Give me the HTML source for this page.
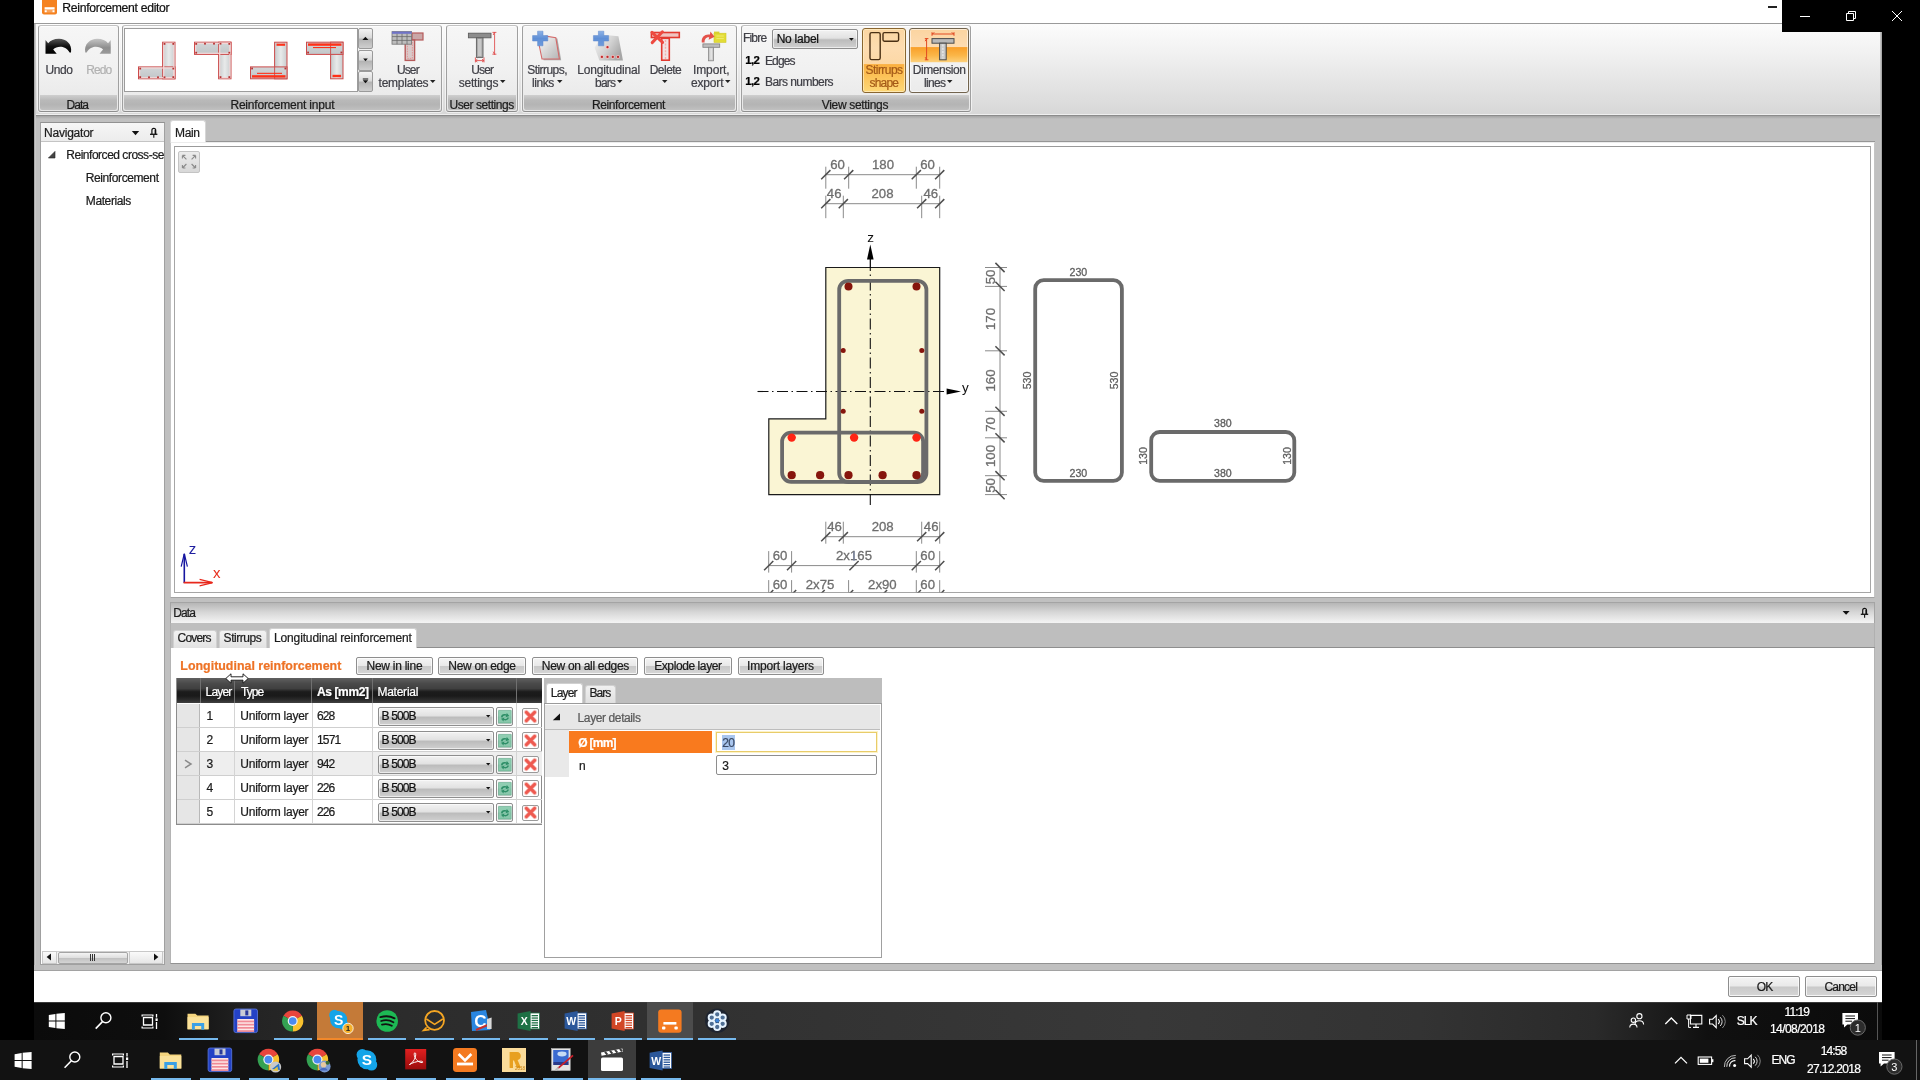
<!DOCTYPE html>
<html lang="en"><head><meta charset="utf-8"><title>Reinforcement editor</title>
<style>
html,body{margin:0;padding:0;background:#000;}
body{width:1920px;height:1080px;position:relative;overflow:hidden;font-family:"Liberation Sans",sans-serif;font-size:11.6px;}
div,span,svg,button,label,h1,h2,ul,li,table{position:absolute;box-sizing:border-box;margin:0;padding:0;}
.t{white-space:nowrap;line-height:1;-webkit-text-stroke:0.22px currentColor;}
svg{overflow:visible;}
#app{left:0;top:0;width:1920px;height:1080px;will-change:transform;}
.grp{border:1px solid #a0a0a0;border-top-color:#c2c2c2;border-bottom-color:#8e8e8e;border-radius:3px;background:linear-gradient(#f6f6f6,#f1f1f1 50%,#e7e7e7);box-shadow:inset 0 1px 0 rgba(255,255,255,.8),0 0 0 1px rgba(255,255,255,.6);}
.grpl{left:1px;right:1px;bottom:1px;height:15px;background:linear-gradient(#cfcfcf,#b9b9b9 35%,#b4b4b4 65%,#c0c0c0);border-radius:0 0 2px 2px;}
.btn{border:1px solid #8e8e8e;border-radius:2px;background:linear-gradient(#f4f4f4,#e9e9e9 48%,#c9c9c9 52%,#d6d6d6);box-shadow:inset 0 0 0 1px rgba(255,255,255,.75);}
.cmb{border:1px solid #8e8e8e;border-radius:2px;background:linear-gradient(#f2f2f2,#e2e2e2 45%,#bcbcbc 55%,#d0d0d0);box-shadow:inset 0 0 0 1px rgba(255,255,255,.6);}
</style></head><body><div id="app">
<div class="win" style="left:34px;top:0px;width:1848px;height:1002px;background:#fff;"></div>
<div style="left:34px;top:0px;width:1848px;height:23px;background:#fff;"></div>
<svg style="left:42px;top:0" width="15" height="15" viewBox="0 0 15 15"><rect x="0" y="-2" width="15" height="16.5" rx="2" fill="#f58220"/><rect x="2.6" y="7.2" width="10" height="2.5" fill="#fff"/><rect x="2.2" y="9.7" width="10.8" height="2.8" fill="#f9a45c"/><rect x="2.8" y="10.3" width="1.9" height="1.9" fill="#fff"/><rect x="10.5" y="10.3" width="1.9" height="1.9" fill="#fff"/></svg>
<span class="t" style="left:62.30px;top:2.00px;font-size:12.2px;color:#111;letter-spacing:-0.304px;">Reinforcement editor</span>
<div style="left:1767.5px;top:6.3px;width:9.5px;height:1.8px;background:#222;"></div>
<div style="left:34px;top:23px;width:1848px;height:1px;background:#9a9a9a;"></div>
<div style="left:34px;top:24px;width:1848px;height:91px;background:linear-gradient(#fcfcfc,#f0f0f0 35%,#d7d7d7);"></div>
<div style="left:34px;top:114px;width:1848px;height:1px;background:#efefef;"></div>
<div style="left:34px;top:115px;width:1848px;height:1px;background:#8c8c8c;"></div>
<div style="left:34px;top:116px;width:1848px;height:855px;background:#c0c0c0;"></div>
<div style="left:34px;top:116px;width:1848px;height:3px;background:linear-gradient(#a4a4a4,#c0c0c0);"></div>
<div style="left:34px;top:24px;width:2px;height:947px;background:linear-gradient(90deg,#9c9c9c,#d8d8d8);"></div>
<div style="left:1880px;top:24px;width:2px;height:947px;background:linear-gradient(90deg,#d0d0d0,#9c9c9c);"></div>
<div style="left:1782px;top:0px;width:138px;height:32px;background:#000;"></div>
<svg style="left:1782px;top:0" width="138" height="32" viewBox="1782 0 138 32" fill="none" stroke="#fff" stroke-width="1"><path d="M1800 16.5h10"/><path d="M1846.5 13.5h7v7h-7z"/><path d="M1848.5 13.5v-2h7v7h-2"/><path d="M1892 11l10 10M1902 11l-10 10"/></svg>
<div class="grp" style="left:38px;top:25px;width:81px;height:87px;"><div class="grpl"></div></div>
<span class="t" style="left:66.40px;top:99.00px;font-size:12px;color:#1c1c1c;letter-spacing:-0.900px;">Data</span>
<div class="grp" style="left:122px;top:25px;width:319.5px;height:87px;"><div class="grpl"></div></div>
<span class="t" style="left:230.40px;top:99.00px;font-size:12px;color:#1c1c1c;letter-spacing:-0.178px;">Reinforcement input</span>
<div class="grp" style="left:445.5px;top:25px;width:72px;height:87px;"><div class="grpl"></div></div>
<span class="t" style="left:449.40px;top:99.00px;font-size:12px;color:#1c1c1c;letter-spacing:-0.427px;">User settings</span>
<div class="grp" style="left:521.5px;top:25px;width:215px;height:87px;"><div class="grpl"></div></div>
<span class="t" style="left:592.00px;top:99.00px;font-size:12px;color:#1c1c1c;letter-spacing:-0.397px;">Reinforcement</span>
<div class="grp" style="left:740.5px;top:25px;width:230px;height:87px;"><div class="grpl"></div></div>
<span class="t" style="left:821.80px;top:99.00px;font-size:12px;color:#1c1c1c;letter-spacing:-0.325px;">View settings</span>
<svg style="left:44px;top:37px" width="30" height="19" viewBox="44 37 30 19">
<defs><linearGradient id="gu" x1="0" y1="0" x2="0" y2="1"><stop offset="0" stop-color="#555"/><stop offset=".5" stop-color="#111"/><stop offset="1" stop-color="#000"/></linearGradient>
<linearGradient id="gr" x1="0" y1="0" x2="0" y2="1"><stop offset="0" stop-color="#c4c4c4"/><stop offset=".6" stop-color="#8e8e8e"/><stop offset="1" stop-color="#9a9a9a"/></linearGradient></defs>
<path d="M45.5 40 L45.5 53.7 L56.7 53.7 L53.2 49.6 C57 46 65 45 69.6 52.6 L71 52.4 C72.5 44 66 38.8 59 38.8 C54 38.8 50.5 40.6 48.2 43.2 Z" fill="url(#gu)"/>
</svg>
<svg style="left:84px;top:37px" width="30" height="19" viewBox="84 37 30 19">
<path d="M110.75 40 L110.75 53.7 L99.55 53.7 L103.05 49.6 C99.25 46 91.25 45 86.65 52.6 L85.25 52.4 C83.75 44 90.25 38.8 97.25 38.8 C102.25 38.8 105.75 40.6 108.05 43.2 Z" fill="url(#gr)"/>
</svg>
<span class="t" style="left:45.60px;top:64.00px;font-size:12px;color:#3f3f46;letter-spacing:-0.493px;">Undo</span>
<span class="t" style="left:86.20px;top:64.00px;font-size:12px;color:#b2b2b2;letter-spacing:-0.900px;">Redo</span>
<div style="left:124.3px;top:28px;width:233.7px;height:64px;background:#fff;border:1px solid #9c9c9c;"></div>
<svg style="left:136.3px;top:39px" width="42" height="44" viewBox="136.3 39 42 44"><defs><linearGradient id="gg138" x1="0" y1="0" x2="1" y2="0"><stop offset="0" stop-color="#c6cacc"/><stop offset=".5" stop-color="#e8eaea"/><stop offset="1" stop-color="#c8ccce"/></linearGradient><linearGradient id="gh138" x1="0" y1="0" x2="0" y2="1"><stop offset="0" stop-color="#d2d6d8"/><stop offset="1" stop-color="#c2c6c8"/></linearGradient></defs><rect x="162.9" y="42.2" width="12.4" height="36.599999999999994" fill="url(#gg138)" stroke="#cc4a4a" stroke-width="1"/><rect x="138.8" y="66.9" width="36.5" height="11.899999999999991" fill="url(#gh138)" stroke="#cc4a4a" stroke-width="1"/><path d="M162.9 66.9V78.8" stroke="#cc4a4a" stroke-width=".9"/><rect x="139.9" y="68.0" width="34.3" height="9.699999999999992" fill="none" stroke="#f3d6d6" stroke-width="1.2"/><rect x="164.0" y="43.300000000000004" width="10.2" height="34.39999999999999" fill="none" stroke="#f3d6d6" stroke-width="1.2"/><rect x="139.6" y="67.7" width="1.8" height="1.8" fill="#b83434"/><rect x="139.6" y="76.2" width="1.8" height="1.8" fill="#b83434"/><rect x="148.4" y="76.4" width="1.8" height="1.8" fill="#b83434"/><rect x="157.4" y="76.4" width="1.8" height="1.8" fill="#b83434"/><rect x="163.9" y="76.4" width="1.8" height="1.8" fill="#b83434"/><rect x="172.7" y="76.2" width="1.8" height="1.8" fill="#b83434"/><rect x="172.7" y="67.7" width="1.8" height="1.8" fill="#b83434"/><rect x="163.9" y="43.0" width="1.8" height="1.8" fill="#b83434"/><rect x="172.7" y="43.0" width="1.8" height="1.8" fill="#b83434"/></svg>
<svg style="left:192.2px;top:39px" width="42" height="44" viewBox="192.2 39 42 44"><defs><linearGradient id="gg194" x1="0" y1="0" x2="1" y2="0"><stop offset="0" stop-color="#c6cacc"/><stop offset=".5" stop-color="#e8eaea"/><stop offset="1" stop-color="#c8ccce"/></linearGradient><linearGradient id="gh194" x1="0" y1="0" x2="0" y2="1"><stop offset="0" stop-color="#d2d6d8"/><stop offset="1" stop-color="#c2c6c8"/></linearGradient></defs><rect x="218.79999999999998" y="42.2" width="12.4" height="36.599999999999994" fill="url(#gg194)" stroke="#cc4a4a" stroke-width="1"/><rect x="194.7" y="42.2" width="36.5" height="12.199999999999996" fill="url(#gh194)" stroke="#cc4a4a" stroke-width="1"/><path d="M218.79999999999998 42.2V54.4" stroke="#cc4a4a" stroke-width=".9"/><rect x="195.79999999999998" y="43.300000000000004" width="34.3" height="9.999999999999996" fill="none" stroke="#f3d6d6" stroke-width="1.2"/><rect x="219.89999999999998" y="43.300000000000004" width="10.2" height="34.39999999999999" fill="none" stroke="#f3d6d6" stroke-width="1.2"/><rect x="195.5" y="43.0" width="1.8" height="1.8" fill="#b83434"/><rect x="195.5" y="51.8" width="1.8" height="1.8" fill="#b83434"/><rect x="204.3" y="42.8" width="1.8" height="1.8" fill="#b83434"/><rect x="213.3" y="42.8" width="1.8" height="1.8" fill="#b83434"/><rect x="219.8" y="42.8" width="1.8" height="1.8" fill="#b83434"/><rect x="228.6" y="43.0" width="1.8" height="1.8" fill="#b83434"/><rect x="228.6" y="51.8" width="1.8" height="1.8" fill="#b83434"/><rect x="219.8" y="76.2" width="1.8" height="1.8" fill="#b83434"/><rect x="228.6" y="76.2" width="1.8" height="1.8" fill="#b83434"/></svg>
<svg style="left:248px;top:39px" width="42" height="44" viewBox="248 39 42 44"><defs><linearGradient id="gg250" x1="0" y1="0" x2="1" y2="0"><stop offset="0" stop-color="#c6cacc"/><stop offset=".5" stop-color="#e8eaea"/><stop offset="1" stop-color="#c8ccce"/></linearGradient><linearGradient id="gh250" x1="0" y1="0" x2="0" y2="1"><stop offset="0" stop-color="#d2d6d8"/><stop offset="1" stop-color="#c2c6c8"/></linearGradient></defs><rect x="274.6" y="42.2" width="12.4" height="36.599999999999994" fill="url(#gg250)" stroke="#cc4a4a" stroke-width="1"/><rect x="250.5" y="66.9" width="36.5" height="11.899999999999991" fill="url(#gh250)" stroke="#cc4a4a" stroke-width="1"/><path d="M274.6 66.9V78.8" stroke="#cc4a4a" stroke-width=".9"/><rect x="252" y="75.2" width="33.5" height="2.4" fill="#ff3018"/><rect x="257" y="72.8" width="25" height="1.1" fill="#ff3018"/><rect x="276.5" y="43.6" width="8.6" height="2.2" fill="#ff3018"/><rect x="251.2" y="67.6" width="1.8" height="1.8" fill="#b83434"/><rect x="284.5" y="67.6" width="1.8" height="1.8" fill="#b83434"/></svg>
<svg style="left:303.8px;top:39px" width="42" height="44" viewBox="303.8 39 42 44"><defs><linearGradient id="gg305" x1="0" y1="0" x2="1" y2="0"><stop offset="0" stop-color="#c6cacc"/><stop offset=".5" stop-color="#e8eaea"/><stop offset="1" stop-color="#c8ccce"/></linearGradient><linearGradient id="gh305" x1="0" y1="0" x2="0" y2="1"><stop offset="0" stop-color="#d2d6d8"/><stop offset="1" stop-color="#c2c6c8"/></linearGradient></defs><rect x="330.40000000000003" y="42.2" width="12.4" height="36.599999999999994" fill="url(#gg305)" stroke="#cc4a4a" stroke-width="1"/><rect x="306.3" y="42.2" width="36.5" height="12.199999999999996" fill="url(#gh305)" stroke="#cc4a4a" stroke-width="1"/><path d="M330.40000000000003 42.2V54.4" stroke="#cc4a4a" stroke-width=".9"/><rect x="307.8" y="43.4" width="33.5" height="2.4" fill="#ff3018"/><rect x="312.8" y="47" width="23" height="1.1" fill="#ff3018"/><rect x="332.3" y="74.8" width="8.6" height="2.4" fill="#ff3018"/><rect x="307.0" y="51.6" width="1.8" height="1.8" fill="#b83434"/><rect x="340.3" y="51.6" width="1.8" height="1.8" fill="#b83434"/></svg>
<div style="left:358px;top:28px;width:14.5px;height:21px;background:linear-gradient(#f4f4f4,#dadada 45%,#b4b4b4 55%,#cfcfcf);border:1px solid #9a9a9a;border-radius:2px;"></div>
<div style="left:358px;top:49.5px;width:14.5px;height:21px;background:linear-gradient(#f4f4f4,#dadada 45%,#b4b4b4 55%,#cfcfcf);border:1px solid #9a9a9a;border-radius:2px;"></div>
<div style="left:358px;top:71px;width:14.5px;height:21px;background:linear-gradient(#f4f4f4,#dadada 45%,#b4b4b4 55%,#cfcfcf);border:1px solid #9a9a9a;border-radius:2px;"></div>
<svg style="left:358px;top:28px" width="15" height="64" viewBox="358 28 15 64" fill="#111"><path d="M362.4 40h6l-3-3.2z"/><path d="M363.2 58.6h4.6l-2.3 2.6z"/><path d="M362.8 78.4h5.4v1h-5.4zM362.8 80.2h5.4l-2.7 3z"/></svg>
<svg style="left:391px;top:30px" width="34" height="33" viewBox="391 30 34 33">
<rect x="412" y="33" width="11" height="7" fill="#c9a7a7" stroke="#b65a5a" stroke-width="1.2"/>
<rect x="405.2" y="40" width="9.4" height="20.4" fill="#d9c9c9" stroke="#b65a5a" stroke-width="1.4"/>
<rect x="407.4" y="42" width="5" height="16.4" fill="none" stroke="#e58a8a" stroke-width=".8" stroke-dasharray="1.5 1"/>
<rect x="392" y="31.6" width="19.6" height="12.6" fill="#bdbdbd" stroke="#767676" stroke-width=".8"/>
<rect x="392" y="31.6" width="19.6" height="2.2" fill="#6f73c8"/>
<path d="M392 36.6h19.6M392 40.4h19.6M397 33.8v10.4M402 33.8v10.4M407 33.8v10.4" stroke="#6a6a6a" stroke-width=".8"/>
</svg>
<span class="t" style="left:397.00px;top:64.00px;font-size:12px;color:#3f3f46;letter-spacing:-0.900px;">User</span>
<span class="t" style="left:378.60px;top:77.00px;font-size:12px;color:#3f3f46;letter-spacing:-0.253px;">templates</span>
<svg style="left:430.4px;top:80px" width="5.5" height="3" viewBox="0 0 5.5 3"><path d="M0 0h5.5l-2.75 3z" fill="#222"/></svg>
<svg style="left:466px;top:30px" width="34" height="34" viewBox="466 30 34 34">
<rect x="468.4" y="33.2" width="22.6" height="4.6" fill="#8d8d8d" stroke="#5e5e5e" stroke-width=".9"/>
<rect x="476.4" y="37.8" width="6.6" height="19.6" fill="#a9a9a9" stroke="#5e5e5e" stroke-width=".9"/>
<rect x="478" y="39" width="3.4" height="17" fill="#c8c8c8"/>
<path d="M494.6 32v22.6M492.4 32.4h4M492.4 54.2h4M494.6 32l-1.4 3M494.6 54.6l-1.4-3" stroke="#e05050" stroke-width=".9" fill="none"/>
<path d="M475.4 57.4v5M484 57.4v5M475.4 60.6h8.6M475.4 60.6l2-1.4M484 60.6l-2-1.4M475.4 60.6l2 1.4M484 60.6l-2 1.4" stroke="#e05050" stroke-width=".9" fill="none"/>
</svg>
<span class="t" style="left:471.30px;top:64.00px;font-size:12px;color:#3f3f46;letter-spacing:-0.900px;">User</span>
<span class="t" style="left:458.80px;top:77.00px;font-size:12px;color:#3f3f46;letter-spacing:-0.249px;">settings</span>
<svg style="left:499.8px;top:80px" width="5.5" height="3" viewBox="0 0 5.5 3"><path d="M0 0h5.5l-2.75 3z" fill="#222"/></svg>
<svg style="left:531px;top:30px" width="32" height="34" viewBox="531 30 32 34">
<defs><linearGradient id="gs1" x1="0" y1="0" x2="1" y2="1"><stop offset="0" stop-color="#fafafa"/><stop offset="1" stop-color="#b4b4b4"/></linearGradient>
<linearGradient id="gpl" x1="0" y1="0" x2="0" y2="1"><stop offset="0" stop-color="#8db2e6"/><stop offset=".5" stop-color="#5f8fd6"/><stop offset="1" stop-color="#6c9adc"/></linearGradient></defs>
<path d="M540.6 45.5L543.6 60.2L561.2 60.2L557.4 38.6L547.6 37Z" fill="#a9a9a9"/>
<path d="M539 44.5L542 59L559.4 59L555.8 37.8L546 36.2Z" fill="url(#gs1)" stroke="#d46a6a" stroke-width="1.1"/>
<path d="M537.6 31.2h5.4v4.4h4.8v5.4h-4.8v4.8h-5.4v-4.8h-5v-5.4h5z" fill="url(#gpl)" stroke="#5a86cc" stroke-width=".5"/>
</svg>
<span class="t" style="left:527.30px;top:64.00px;font-size:12px;color:#3f3f46;letter-spacing:-0.562px;">Stirrups,</span>
<span class="t" style="left:532.00px;top:77.00px;font-size:12px;color:#3f3f46;letter-spacing:-0.425px;">links</span>
<svg style="left:556.7px;top:80px" width="5.5" height="3" viewBox="0 0 5.5 3"><path d="M0 0h5.5l-2.75 3z" fill="#222"/></svg>
<svg style="left:592px;top:30px" width="32" height="34" viewBox="592 30 32 34">
<defs><linearGradient id="gs2" x1="0" y1="0" x2="1" y2=".6"><stop offset="0" stop-color="#f6f6f6"/><stop offset=".55" stop-color="#d2d2d2"/><stop offset="1" stop-color="#a6a6a6"/></linearGradient></defs>
<path d="M603 34.8L618.4 36.2L623 60.4L599.4 60.4L594.6 47.6Z" fill="url(#gs2)"/>
<circle cx="607.5" cy="47.2" r="2" fill="#f6c4c4"/><circle cx="607.5" cy="47.2" r="1.15" fill="#c02a2a"/>
<circle cx="601.9" cy="56.9" r="1.9" fill="#f0c0c0"/><circle cx="601.9" cy="56.9" r="1.15" fill="#c02a2a"/><circle cx="607.5" cy="56.9" r="1.9" fill="#f0c0c0"/><circle cx="607.5" cy="56.9" r="1.15" fill="#c02a2a"/><circle cx="612.8" cy="56.9" r="1.9" fill="#f0c0c0"/><circle cx="612.8" cy="56.9" r="1.15" fill="#c02a2a"/><circle cx="618" cy="56.9" r="1.9" fill="#f0c0c0"/><circle cx="618" cy="56.9" r="1.15" fill="#c02a2a"/>
<path d="M598.4 31.2h5.4v4.4h4.8v5.4h-4.8v4.8h-5.4v-4.8h-5v-5.4h5z" fill="url(#gpl)" stroke="#5a86cc" stroke-width=".5"/>
</svg>
<span class="t" style="left:577.30px;top:64.00px;font-size:12px;color:#3f3f46;letter-spacing:-0.158px;">Longitudinal</span>
<span class="t" style="left:595.00px;top:77.00px;font-size:12px;color:#3f3f46;letter-spacing:-0.780px;">bars</span>
<svg style="left:617.2px;top:80px" width="5.5" height="3" viewBox="0 0 5.5 3"><path d="M0 0h5.5l-2.75 3z" fill="#222"/></svg>
<svg style="left:649px;top:30px" width="33" height="33" viewBox="649 30 33 33">
<rect x="651.4" y="32.5" width="27.9" height="5" fill="#f0c4c0" stroke="#e23a30" stroke-width="1.6"/>
<rect x="661.7" y="38.3" width="7.6" height="21.9" fill="#f0e4e4" stroke="#e23a30" stroke-width="1.6"/>
<path d="M665.5 40v19" stroke="#f4b0ac" stroke-width="1.4" stroke-dasharray="2 1.4"/>
<path d="M652 32.4L662.6 42.4M662.4 31.8L652.2 42.6" stroke="#ee4a40" stroke-width="3" stroke-linecap="round"/>
</svg>
<span class="t" style="left:649.70px;top:64.00px;font-size:12px;color:#3f3f46;letter-spacing:-0.516px;">Delete</span>
<svg style="left:662px;top:80px" width="5.5" height="3" viewBox="0 0 5.5 3"><path d="M0 0h5.5l-2.75 3z" fill="#222"/></svg>
<svg style="left:699px;top:30px" width="30" height="33" viewBox="699 30 30 33">
<rect x="702.9" y="43.9" width="16.8" height="3.4" fill="#bdbdbd" stroke="#7e7e7e" stroke-width=".8"/>
<rect x="708.6" y="47.3" width="5" height="13.5" fill="#cdcdcd" stroke="#868686" stroke-width=".8"/>
<path d="M711.1 48.5v11" stroke="#f2f2f2" stroke-width="1"/>
<rect x="714" y="33.2" width="12" height="9.2" fill="#e2dc36" stroke="#cfc826" stroke-width=".6"/>
<rect x="714" y="31.6" width="5.4" height="2.4" fill="#d8d22e"/>
<path d="M716.4 36h7.4M716.4 38.6h7.4" stroke="#f0ea70" stroke-width="1"/>
<path d="M701.8 42.4C701 36.6 705.6 33.6 710 34.6L710.4 31.4L714.6 36.8L708.6 39.8L709.2 37.2C706.4 36.8 704.4 39 704.6 42.4Z" fill="#e4524a"/>
</svg>
<span class="t" style="left:693.00px;top:64.00px;font-size:12px;color:#3f3f46;letter-spacing:-0.120px;">Import,</span>
<span class="t" style="left:691.00px;top:77.00px;font-size:12px;color:#3f3f46;letter-spacing:-0.172px;">export</span>
<svg style="left:724.8px;top:80px" width="5.5" height="3" viewBox="0 0 5.5 3"><path d="M0 0h5.5l-2.75 3z" fill="#222"/></svg>
<span class="t" style="left:742.90px;top:32.00px;font-size:12px;color:#3f3f46;letter-spacing:-0.765px;">Fibre</span>
<div class="cmb" style="left:772.2px;top:28.7px;width:86.2px;height:20px;"></div>
<span class="t" style="left:776.70px;top:33.00px;font-size:12px;color:#111;letter-spacing:-0.249px;">No label</span>
<svg style="left:849.2px;top:37.6px" width="4.8" height="2.8" viewBox="0 0 4.8 2.8"><path d="M0 0h4.8l-2.4 2.8z" fill="#111"/></svg>
<span class="t" style="left:745.20px;top:55.00px;font-size:11.4px;color:#000;font-weight:bold;letter-spacing:-0.623px;">1,2</span>
<span class="t" style="left:765.00px;top:55.00px;font-size:12px;color:#3f3f46;letter-spacing:-0.900px;">Edges</span>
<span class="t" style="left:745.20px;top:76.00px;font-size:11.4px;color:#000;font-weight:bold;letter-spacing:-0.623px;">1,2</span>
<span class="t" style="left:765.00px;top:76.00px;font-size:12px;color:#3f3f46;letter-spacing:-0.555px;">Bars numbers</span>
<div style="left:862px;top:28.3px;width:43.8px;height:64.7px;border:1px solid #8a6630;border-radius:3px;background:linear-gradient(#fbd6a2,#fddcb0 30%,#fcd8a6 55%,#fbb040 56.5%,#fcc258 75%,#fdd878);box-shadow:inset 0 0 0 1px rgba(255,240,200,.7);"></div>
<svg style="left:866px;top:30px" width="36" height="32" viewBox="866 30 36 32" fill="none" stroke="#4a3014" stroke-width="1.4">
<rect x="870" y="32.6" width="10.2" height="27" rx="1.6"/><rect x="883" y="32.6" width="15.6" height="8.6" rx="1.4"/></svg>
<span class="t" style="left:865.60px;top:64.00px;font-size:12px;color:#a45a18;letter-spacing:-0.563px;">Stirrups</span>
<span class="t" style="left:869.50px;top:77.00px;font-size:12px;color:#a45a18;letter-spacing:-0.800px;">shape</span>
<div style="left:909px;top:28.3px;width:60.2px;height:64.7px;border:1px solid #72644e;border-radius:3px;background:linear-gradient(#fbd4a0,#fddcb2 28%,#f9a02a 29.5%,#fbb648 42%,#fdcf78 52%,#f2f2f2 53.5%,#ebebeb);box-shadow:inset 0 0 0 1px rgba(255,255,255,.55);"></div>
<svg style="left:922px;top:30px" width="36" height="32" viewBox="922 30 36 32">
<rect x="932" y="38.6" width="22" height="4.6" fill="#b9b9b9" stroke="#4a4a4a" stroke-width="1"/>
<rect x="939.6" y="43.2" width="6.6" height="16.6" fill="#c9c9c9" stroke="#4a4a4a" stroke-width="1"/>
<path d="M942.9 44.6v14" stroke="#eee" stroke-width="1.2" stroke-dasharray="2 1.2"/>
<path d="M932 34h22M932 32.2v3.6M954 32.2v3.6M932 34l2.4-1.4M954 34l-2.4-1.4" stroke="#e24a22" stroke-width="1" fill="none"/>
<path d="M926.6 38.6v21.2M924.8 38.6h3.6M924.8 59.8h3.6M926.6 38.6l-1.4 2.6M926.6 59.8l-1.4-2.6" stroke="#e24a22" stroke-width="1" fill="none"/>
</svg>
<span class="t" style="left:912.80px;top:64.00px;font-size:12px;color:#3f3f46;letter-spacing:-0.450px;">Dimension</span>
<span class="t" style="left:924.00px;top:77.00px;font-size:12px;color:#3f3f46;letter-spacing:-0.665px;">lines</span>
<svg style="left:947.4px;top:80px" width="5.5" height="3" viewBox="0 0 5.5 3"><path d="M0 0h5.5l-2.75 3z" fill="#222"/></svg>
<div style="left:40px;top:122px;width:124.5px;height:842.5px;background:#fff;border:1px solid #a0a0a0;border-top-color:#929292;"></div>
<div style="left:41px;top:123px;width:122.5px;height:19px;background:linear-gradient(#f6f6f6,#ececec);border-bottom:1px solid #c4c4c4;"></div>
<span class="t" style="left:44.00px;top:127.00px;font-size:12px;color:#1c1c1c;letter-spacing:-0.220px;">Navigator</span>
<svg style="left:131px;top:128px" width="28" height="11" viewBox="131 128 28 11"><path d="M131.8 131h7.4l-3.7 4.2z" fill="#111"/><path d="M151.9 134V130.2A1.9 1.9 0 0 1 155.7 130.2V134" fill="none" stroke="#111" stroke-width="1.2"/><path d="M155.3 130V134" stroke="#111" stroke-width="1.4"/><path d="M150 134.3H157.4" stroke="#111" stroke-width="1.3"/><path d="M153.8 134.6V137.8" stroke="#111" stroke-width="1.1"/></svg>
<svg style="left:48px;top:151px" width="8" height="8" viewBox="0 0 8 8"><path d="M7 0.4V7H0.4z" fill="#444" stroke="#222" stroke-width=".6"/></svg>
<div style="left:41.5px;top:143px;width:122px;height:30px;overflow:hidden;position:absolute">
<span class="t" style="left:24.80px;top:6.00px;font-size:12px;color:#1c1c1c;letter-spacing:-0.481px;">Reinforced cross-section</span>
</div>
<span class="t" style="left:85.80px;top:172.00px;font-size:12px;color:#1c1c1c;letter-spacing:-0.405px;">Reinforcement</span>
<span class="t" style="left:85.80px;top:195.00px;font-size:12px;color:#1c1c1c;letter-spacing:-0.395px;">Materials</span>
<div style="left:41.5px;top:950.5px;width:122px;height:13px;background:#f0f0f0;border-top:1px solid #d0d0d0;"></div>
<div style="left:41.5px;top:951px;width:15.5px;height:12.5px;background:linear-gradient(#fafafa,#e6e6e6);border:1px solid #c8c8c8;"></div>
<div style="left:129.3px;top:951px;width:34px;height:12.5px;background:linear-gradient(#fafafa,#e6e6e6);border:1px solid #c8c8c8;"></div>
<div style="left:57.8px;top:951.5px;width:70.5px;height:12px;background:linear-gradient(#f4f4f4,#e0e0e0 45%,#c2c2c2 55%,#d4d4d4);border:1px solid #a4a4a4;border-radius:2px;"></div>
<svg style="left:41px;top:951px" width="124" height="13" viewBox="41 951 124 13"><path d="M51 953.6v7l-4.4-3.5z" fill="#111"/><path d="M154 953.6v7l4.4-3.5z" fill="#111"/><path d="M90.5 954v7M92.5 954v7M94.5 954v7" stroke="#333" stroke-width="1"/></svg>
<div style="left:205px;top:141px;width:1670px;height:1px;background:#969696;"></div>
<div style="left:169.6px;top:120px;width:36px;height:23px;background:#fff;border:1px solid #d6d6d6;border-bottom:none;border-radius:3px 3px 0 0;"></div>
<span class="t" style="left:175.00px;top:127.00px;font-size:12px;color:#1c1c1c;letter-spacing:-0.347px;">Main</span>
<div style="left:170px;top:142px;width:1705px;height:455.5px;background:#fff;border:1px solid #c4c4c4;border-top-color:#ececec;border-bottom-color:#a2a2a2;"></div>
<div style="left:173.5px;top:146px;width:1697px;height:446.8px;background:#fff;border:1px solid #a6a6a6;border-top-color:#9a9a9a;"></div>
<div style="left:177.6px;top:150.6px;width:22.8px;height:22px;background:linear-gradient(#ececec,#d8d8d8);border:1px solid #c4c4c4;border-radius:2px;"></div>
<svg style="left:178px;top:151px" width="22" height="21" viewBox="178 151 22 21" stroke="#8a8a8a" stroke-width="1.1" fill="none"><path d="M182.4 155.4l4 4M182.4 155.4h3M182.4 155.4v3"/><path d="M195.6 155.4l-4 4M195.6 155.4h-3M195.6 155.4v3"/><path d="M182.4 168l4-4M182.4 168h3M182.4 168v-3"/><path d="M195.6 168l-4-4M195.6 168h-3M195.6 168v-3"/></svg>
<svg style="left:174px;top:147px" width="1696" height="445.5" viewBox="174 147 1696 445.5" font-family="Liberation Sans, sans-serif"><defs><clipPath id="cv"><rect x="174" y="147" width="1696" height="445.5"/></clipPath></defs><g clip-path="url(#cv)"><path d="M825.8 267.5H939.7V494.6H768.8V418.9H825.8Z" fill="#faf5d4" stroke="#1a1a1a" stroke-width="1.2"/><path d="M870.3 267V505.8" stroke="#111" stroke-width="1.1" stroke-dasharray="11 3.5 1.5 3.5" stroke-dashoffset="7"/><path d="M757.5 391.5H947" stroke="#111" stroke-width="1.1" stroke-dasharray="11 3.5 1.5 3.5"/><path d="M870.3 244.6L873.6 259.4H867Z" fill="#000"/><path d="M870.3 258V267.5" stroke="#000" stroke-width="1.2"/><path d="M961 391.5L946.6 388.4V394.6Z" fill="#000"/><text x="870.5" y="241.6" font-size="13.5" text-anchor="middle" fill="#111">z</text><text x="965.4" y="391.6" font-size="13.5" text-anchor="middle" fill="#111">y</text><rect x="839.2" y="280.8" width="87.2" height="201.2" rx="9" fill="none" stroke="#6a6a6a" stroke-width="3.8"/><rect x="782.1" y="432.6" width="141" height="49.2" rx="9" fill="none" stroke="#6a6a6a" stroke-width="3.8"/><circle cx="848.5" cy="286.4" r="4" fill="#86150c"/><circle cx="916.5" cy="286.4" r="4" fill="#86150c"/><circle cx="843.2" cy="350.6" r="2.5" fill="#86150c"/><circle cx="843.2" cy="411.2" r="2.5" fill="#86150c"/><circle cx="921.8" cy="350.6" r="2.5" fill="#86150c"/><circle cx="921.8" cy="411.2" r="2.5" fill="#86150c"/><circle cx="791.7" cy="437.6" r="4.2" fill="#ff2414"/><circle cx="854.1" cy="437.6" r="4.2" fill="#ff2414"/><circle cx="916.5" cy="437.6" r="4.2" fill="#ff2414"/><circle cx="791.7" cy="475.2" r="4.1" fill="#86150c"/><circle cx="820.1" cy="475.2" r="4.1" fill="#86150c"/><circle cx="848.5" cy="475.2" r="4.1" fill="#86150c"/><circle cx="882.6" cy="475.2" r="4.1" fill="#86150c"/><circle cx="916.5" cy="475.2" r="4.1" fill="#86150c"/><path d="M825.3 174.7H940.2" stroke="#8a8a8a" stroke-width="1"/><path d="M825.8 166.7V188.7" stroke="#8a8a8a" stroke-width="1"/><path d="M821.2 179.29999999999998L830.4 170.1" stroke="#4e4e4e" stroke-width="1.5"/><path d="M848.7 166.7V188.7" stroke="#8a8a8a" stroke-width="1"/><path d="M844.1 179.29999999999998L853.3 170.1" stroke="#4e4e4e" stroke-width="1.5"/><path d="M916.3 166.7V188.7" stroke="#8a8a8a" stroke-width="1"/><path d="M911.7 179.29999999999998L920.9 170.1" stroke="#4e4e4e" stroke-width="1.5"/><path d="M939.7 166.7V188.7" stroke="#8a8a8a" stroke-width="1"/><path d="M935.1 179.29999999999998L944.3 170.1" stroke="#4e4e4e" stroke-width="1.5"/><text x="837.5" y="168.8" font-size="13.2" text-anchor="middle" fill="#6e6e6e" stroke="#6e6e6e" stroke-width=".3">60</text><text x="883" y="168.8" font-size="13.2" text-anchor="middle" fill="#6e6e6e" stroke="#6e6e6e" stroke-width=".3">180</text><text x="927.5" y="168.8" font-size="13.2" text-anchor="middle" fill="#6e6e6e" stroke="#6e6e6e" stroke-width=".3">60</text><path d="M825.3 203.7H940.2" stroke="#8a8a8a" stroke-width="1"/><path d="M825.8 195.7V218.2" stroke="#8a8a8a" stroke-width="1"/><path d="M821.2 208.29999999999998L830.4 199.1" stroke="#4e4e4e" stroke-width="1.5"/><path d="M843.3 195.7V218.2" stroke="#8a8a8a" stroke-width="1"/><path d="M838.7 208.29999999999998L847.9 199.1" stroke="#4e4e4e" stroke-width="1.5"/><path d="M921.7 195.7V218.2" stroke="#8a8a8a" stroke-width="1"/><path d="M917.1 208.29999999999998L926.3 199.1" stroke="#4e4e4e" stroke-width="1.5"/><path d="M939.7 195.7V218.2" stroke="#8a8a8a" stroke-width="1"/><path d="M935.1 208.29999999999998L944.3 199.1" stroke="#4e4e4e" stroke-width="1.5"/><text x="834.2" y="197.6" font-size="13.2" text-anchor="middle" fill="#6e6e6e" stroke="#6e6e6e" stroke-width=".3">46</text><text x="882.5" y="197.6" font-size="13.2" text-anchor="middle" fill="#6e6e6e" stroke="#6e6e6e" stroke-width=".3">208</text><text x="930.8" y="197.6" font-size="13.2" text-anchor="middle" fill="#6e6e6e" stroke="#6e6e6e" stroke-width=".3">46</text><path d="M825.3 536.7H940.2" stroke="#8a8a8a" stroke-width="1"/><path d="M825.8 521.7V543.7" stroke="#8a8a8a" stroke-width="1"/><path d="M821.2 541.3000000000001L830.4 532.1" stroke="#4e4e4e" stroke-width="1.5"/><path d="M843.3 521.7V543.7" stroke="#8a8a8a" stroke-width="1"/><path d="M838.7 541.3000000000001L847.9 532.1" stroke="#4e4e4e" stroke-width="1.5"/><path d="M921.7 521.7V543.7" stroke="#8a8a8a" stroke-width="1"/><path d="M917.1 541.3000000000001L926.3 532.1" stroke="#4e4e4e" stroke-width="1.5"/><path d="M939.7 521.7V543.7" stroke="#8a8a8a" stroke-width="1"/><path d="M935.1 541.3000000000001L944.3 532.1" stroke="#4e4e4e" stroke-width="1.5"/><text x="834.6" y="531" font-size="13.2" text-anchor="middle" fill="#6e6e6e" stroke="#6e6e6e" stroke-width=".3">46</text><text x="882.7" y="531" font-size="13.2" text-anchor="middle" fill="#6e6e6e" stroke="#6e6e6e" stroke-width=".3">208</text><text x="931.2" y="531" font-size="13.2" text-anchor="middle" fill="#6e6e6e" stroke="#6e6e6e" stroke-width=".3">46</text><path d="M768.2 565.6H940.2" stroke="#8a8a8a" stroke-width="1"/><path d="M768.7 551.1V572.6" stroke="#8a8a8a" stroke-width="1"/><path d="M764.1 570.2L773.3 561.0" stroke="#4e4e4e" stroke-width="1.5"/><path d="M791.6 551.1V572.6" stroke="#8a8a8a" stroke-width="1"/><path d="M787.0 570.2L796.2 561.0" stroke="#4e4e4e" stroke-width="1.5"/><path d="M849.4 570.2L858.6 561.0" stroke="#4e4e4e" stroke-width="1.5"/><path d="M916.3 551.1V572.6" stroke="#8a8a8a" stroke-width="1"/><path d="M911.7 570.2L920.9 561.0" stroke="#4e4e4e" stroke-width="1.5"/><path d="M939.7 551.1V572.6" stroke="#8a8a8a" stroke-width="1"/><path d="M935.1 570.2L944.3 561.0" stroke="#4e4e4e" stroke-width="1.5"/><text x="780" y="560.2" font-size="13.2" text-anchor="middle" fill="#6e6e6e" stroke="#6e6e6e" stroke-width=".3">60</text><text x="854" y="560.2" font-size="13.2" text-anchor="middle" fill="#6e6e6e" stroke="#6e6e6e" stroke-width=".3">2x165</text><text x="927.7" y="560.2" font-size="13.2" text-anchor="middle" fill="#6e6e6e" stroke="#6e6e6e" stroke-width=".3">60</text><path d="M854 551.5V561" stroke="#7a8ab0" stroke-width="1"/><path d="M768.2 594.6H940.2" stroke="#8a8a8a" stroke-width="1"/><path d="M768.7 580.1V601.6" stroke="#8a8a8a" stroke-width="1"/><path d="M764.1 599.2L773.3 590.0" stroke="#4e4e4e" stroke-width="1.5"/><path d="M791.6 580.1V601.6" stroke="#8a8a8a" stroke-width="1"/><path d="M787.0 599.2L796.2 590.0" stroke="#4e4e4e" stroke-width="1.5"/><path d="M815.5 599.2L824.7 590.0" stroke="#4e4e4e" stroke-width="1.5"/><path d="M848.6 580.1V601.6" stroke="#8a8a8a" stroke-width="1"/><path d="M844.0 599.2L853.2 590.0" stroke="#4e4e4e" stroke-width="1.5"/><path d="M877.9 599.2L887.1 590.0" stroke="#4e4e4e" stroke-width="1.5"/><path d="M916.3 580.1V601.6" stroke="#8a8a8a" stroke-width="1"/><path d="M911.7 599.2L920.9 590.0" stroke="#4e4e4e" stroke-width="1.5"/><path d="M939.7 580.1V601.6" stroke="#8a8a8a" stroke-width="1"/><path d="M935.1 599.2L944.3 590.0" stroke="#4e4e4e" stroke-width="1.5"/><text x="780" y="588.7" font-size="13.2" text-anchor="middle" fill="#6e6e6e" stroke="#6e6e6e" stroke-width=".3">60</text><text x="820.1" y="588.7" font-size="13.2" text-anchor="middle" fill="#6e6e6e" stroke="#6e6e6e" stroke-width=".3">2x75</text><text x="882.4" y="588.7" font-size="13.2" text-anchor="middle" fill="#6e6e6e" stroke="#6e6e6e" stroke-width=".3">2x90</text><text x="927.7" y="588.7" font-size="13.2" text-anchor="middle" fill="#6e6e6e" stroke="#6e6e6e" stroke-width=".3">60</text><path d="M1000 267.0V495.1" stroke="#8a8a8a" stroke-width="1"/><path d="M985 267.5H1007" stroke="#8a8a8a" stroke-width="1"/><path d="M995.4 262.9L1004.6 272.1" stroke="#4e4e4e" stroke-width="1.5"/><path d="M985 286.4H1007" stroke="#8a8a8a" stroke-width="1"/><path d="M995.4 281.8L1004.6 291.0" stroke="#4e4e4e" stroke-width="1.5"/><path d="M985 350.8H1007" stroke="#8a8a8a" stroke-width="1"/><path d="M995.4 346.2L1004.6 355.4" stroke="#4e4e4e" stroke-width="1.5"/><path d="M985 411.3H1007" stroke="#8a8a8a" stroke-width="1"/><path d="M995.4 406.7L1004.6 415.9" stroke="#4e4e4e" stroke-width="1.5"/><path d="M985 437.8H1007" stroke="#8a8a8a" stroke-width="1"/><path d="M995.4 433.2L1004.6 442.4" stroke="#4e4e4e" stroke-width="1.5"/><path d="M985 475.7H1007" stroke="#8a8a8a" stroke-width="1"/><path d="M995.4 471.1L1004.6 480.3" stroke="#4e4e4e" stroke-width="1.5"/><path d="M985 494.6H1007" stroke="#8a8a8a" stroke-width="1"/><path d="M995.4 490.0L1004.6 499.2" stroke="#4e4e4e" stroke-width="1.5"/><text transform="translate(994.6 277) rotate(-90)" font-size="13.2" text-anchor="middle" fill="#6e6e6e" stroke="#6e6e6e" stroke-width=".3">50</text><text transform="translate(994.6 319) rotate(-90)" font-size="13.2" text-anchor="middle" fill="#6e6e6e" stroke="#6e6e6e" stroke-width=".3">170</text><text transform="translate(994.6 380.5) rotate(-90)" font-size="13.2" text-anchor="middle" fill="#6e6e6e" stroke="#6e6e6e" stroke-width=".3">160</text><text transform="translate(994.6 424.5) rotate(-90)" font-size="13.2" text-anchor="middle" fill="#6e6e6e" stroke="#6e6e6e" stroke-width=".3">70</text><text transform="translate(994.6 456) rotate(-90)" font-size="13.2" text-anchor="middle" fill="#6e6e6e" stroke="#6e6e6e" stroke-width=".3">100</text><text transform="translate(994.6 485.5) rotate(-90)" font-size="13.2" text-anchor="middle" fill="#6e6e6e" stroke="#6e6e6e" stroke-width=".3">50</text><rect x="1035.2" y="280.2" width="86.7" height="200.7" rx="8.5" fill="none" stroke="#6a6a6a" stroke-width="3.8"/><rect x="1151.2" y="432" width="143.1" height="48.9" rx="8.5" fill="none" stroke="#6a6a6a" stroke-width="3.8"/><text x="1078.4" y="276" font-size="10.6" text-anchor="middle" fill="#5e5e5e" stroke="#5e5e5e" stroke-width=".3">230</text><text x="1078.4" y="476.8" font-size="10.6" text-anchor="middle" fill="#5e5e5e" stroke="#5e5e5e" stroke-width=".3">230</text><text x="1222.9" y="427.2" font-size="10.6" text-anchor="middle" fill="#5e5e5e" stroke="#5e5e5e" stroke-width=".3">380</text><text x="1222.9" y="476.8" font-size="10.6" text-anchor="middle" fill="#5e5e5e" stroke="#5e5e5e" stroke-width=".3">380</text><text transform="translate(1031 380.5) rotate(-90)" font-size="10.6" text-anchor="middle" fill="#5e5e5e" stroke="#5e5e5e" stroke-width=".3">530</text><text transform="translate(1117.8 380.5) rotate(-90)" font-size="10.6" text-anchor="middle" fill="#5e5e5e" stroke="#5e5e5e" stroke-width=".3">530</text><text transform="translate(1147 456) rotate(-90)" font-size="10.6" text-anchor="middle" fill="#5e5e5e" stroke="#5e5e5e" stroke-width=".3">130</text><text transform="translate(1290.5 456) rotate(-90)" font-size="10.6" text-anchor="middle" fill="#5e5e5e" stroke="#5e5e5e" stroke-width=".3">130</text><path d="M184.3 583V554" stroke="#1616a0" stroke-width="1.6"/><path d="M184.3 553.6L181.2 566.6M184.3 553.6L187.4 566.6" stroke="#1616a0" stroke-width="1.2"/><path d="M183.6 582.6H212" stroke="#e8281c" stroke-width="1.6"/><path d="M212.8 582.6L199.6 579.4M212.8 582.6L199.6 585.8" stroke="#e8281c" stroke-width="1.2"/><text x="192.6" y="554.4" font-size="15" text-anchor="middle" fill="#2020a0">z</text><text x="216.7" y="577.8" font-size="15" text-anchor="middle" fill="#e8301e">x</text></g></svg>
<div style="left:170px;top:602px;width:1705px;height:20.5px;background:linear-gradient(#b6b6b6,#d6d6d6 45%,#f4f4f4);border:1px solid #a4a4a4;border-bottom:none;"></div>
<span class="t" style="left:173.30px;top:607.00px;font-size:12px;color:#1c1c1c;letter-spacing:-0.900px;">Data</span>
<svg style="left:1840px;top:607px" width="32" height="12" viewBox="1840 607 32 12"><path d="M1842.6 611h7l-3.5 3.8z" fill="#111"/><path d="M1862.7 614V610.2A1.9 1.9 0 0 1 1866.5 610.2V614" fill="none" stroke="#111" stroke-width="1.2"/><path d="M1866.1 610V614" stroke="#111" stroke-width="1.4"/><path d="M1860.8 614.3H1868.2" stroke="#111" stroke-width="1.3"/><path d="M1864.6 614.6V617.8" stroke="#111" stroke-width="1.1"/></svg>
<div style="left:170px;top:622.5px;width:1705px;height:25.5px;background:#bebebe;border-left:1px solid #b0b0b0;border-right:1px solid #b0b0b0;"></div>
<div style="left:170px;top:648px;width:1705px;height:316px;background:#fff;border:1px solid #b4b4b4;border-top:none;border-bottom-color:#929292;"></div>
<div style="left:417px;top:647px;width:1458px;height:1px;background:#8e8e8e;"></div>
<div style="left:173.3px;top:630px;width:43.6px;height:18px;background:linear-gradient(#f2f2f2,#e2e2e2);border:1px solid #d0d0d0;border-bottom:none;border-radius:3px 3px 0 0;"></div>
<div style="left:219px;top:630px;width:48px;height:18px;background:linear-gradient(#f2f2f2,#e2e2e2);border:1px solid #d0d0d0;border-bottom:none;border-radius:3px 3px 0 0;"></div>
<div style="left:269px;top:627.6px;width:148px;height:20.6px;background:#fff;border:1px solid #d0d0d0;border-bottom:none;border-radius:3px 3px 0 0;"></div>
<span class="t" style="left:177.60px;top:632.00px;font-size:12px;color:#1c1c1c;letter-spacing:-0.828px;">Covers</span>
<span class="t" style="left:223.60px;top:632.00px;font-size:12px;color:#1c1c1c;letter-spacing:-0.449px;">Stirrups</span>
<span class="t" style="left:274.00px;top:632.00px;font-size:12px;color:#1c1c1c;letter-spacing:-0.141px;">Longitudinal reinforcement</span>
<span class="t" style="left:180.30px;top:660.00px;font-size:12.4px;color:#ee7326;font-weight:bold;letter-spacing:0.023px;">Longitudinal reinforcement</span>
<div class="btn" style="left:356.3px;top:656.8px;width:76.3px;height:18px;"></div>
<span class="t" style="left:366.50px;top:660.00px;font-size:12px;color:#1a1a1a;letter-spacing:-0.258px;">New in line</span>
<div class="btn" style="left:438px;top:656.8px;width:87.8px;height:18px;"></div>
<span class="t" style="left:448.30px;top:660.00px;font-size:12px;color:#1a1a1a;letter-spacing:-0.304px;">New on edge</span>
<div class="btn" style="left:531.8px;top:656.8px;width:106.7px;height:18px;"></div>
<span class="t" style="left:541.80px;top:660.00px;font-size:12px;color:#1a1a1a;letter-spacing:-0.303px;">New on all edges</span>
<div class="btn" style="left:644.4px;top:656.8px;width:87.6px;height:18px;"></div>
<span class="t" style="left:654.20px;top:660.00px;font-size:12px;color:#1a1a1a;letter-spacing:-0.410px;">Explode layer</span>
<div class="btn" style="left:737.6px;top:656.8px;width:86.7px;height:18px;"></div>
<span class="t" style="left:747.00px;top:660.00px;font-size:12px;color:#1a1a1a;letter-spacing:-0.197px;">Import layers</span>
<div style="left:176px;top:677.5px;width:366px;height:147px;background:#fff;border:1px solid #8c8c8c;"></div>
<div style="left:176.5px;top:678px;width:365px;height:25.3px;background:linear-gradient(#606060,#4a4a4a 22%,#404040 42%,#1c1c1c 55%,#1a1a1a 72%,#2c2c2c 88%,#404040);"></div>
<div style="left:199.5px;top:678px;width:1.4px;height:25.3px;background:#707070;"></div>
<div style="left:233.8px;top:678px;width:1.4px;height:25.3px;background:#707070;"></div>
<div style="left:311.0px;top:678px;width:1.4px;height:25.3px;background:#707070;"></div>
<div style="left:371.8px;top:678px;width:1.4px;height:25.3px;background:#707070;"></div>
<div style="left:515.5px;top:678px;width:1.4px;height:25.3px;background:#707070;"></div>
<span class="t" style="left:205.60px;top:686.00px;font-size:12px;color:#fff;letter-spacing:-0.825px;">Layer</span>
<span class="t" style="left:240.90px;top:686.00px;font-size:12px;color:#fff;letter-spacing:-0.900px;">Type</span>
<span class="t" style="left:316.90px;top:686.00px;font-size:12px;color:#fff;font-weight:bold;letter-spacing:-0.366px;">As [mm2]</span>
<span class="t" style="left:377.40px;top:686.00px;font-size:12px;color:#fff;letter-spacing:-0.237px;">Material</span>
<div style="left:176.5px;top:703.8px;width:23.5px;height:23.2px;background:#e6e6e6;border-right:1px solid #b8b8b8;"></div>
<div style="left:176.5px;top:726.9px;width:365px;height:1px;background:#cfcfcf;"></div>
<span class="t" style="left:206.60px;top:710.00px;font-size:12px;color:#1a1a1a;">1</span>
<span class="t" style="left:240.30px;top:710.00px;font-size:12px;color:#1a1a1a;letter-spacing:-0.253px;">Uniform layer</span>
<span class="t" style="left:316.90px;top:710.00px;font-size:12px;color:#1a1a1a;letter-spacing:-0.820px;">628</span>
<div class="cmb" style="left:377.9px;top:706.5999999999999px;width:116.4px;height:19.2px;"></div>
<span class="t" style="left:381.60px;top:710.00px;font-size:12px;color:#111;letter-spacing:-0.900px;">B 500B</span>
<svg style="left:485.6px;top:714.6999999999999px" width="4.4" height="2.6" viewBox="0 0 4.4 2.6"><path d="M0 0h4.4l-2.2 2.6z" fill="#111"/></svg>
<div class="btn" style="left:496.2px;top:706.5999999999999px;width:17.3px;height:19.2px;"></div>
<svg style="left:498px;top:708.7px" width="14" height="15" viewBox="0 0 14 15"><rect x="0.6" y="1.6" width="12.6" height="12.4" fill="#74c4a0" fill-opacity=".78" stroke="#58a884" stroke-opacity=".7" stroke-width=".8"/><path d="M3 8.2C3 5.4 6 4.4 8.4 5.6L8.8 4L11.4 7L7.6 8.2L8 6.8C6.4 6.2 4.8 7 4.6 8.6Z" fill="#2f8f68"/><path d="M10.8 8.6C10.8 11 8 12 5.8 11L5.4 12.4L3 9.8L6.4 8.6L6.1 9.9C7.6 10.4 9 9.8 9.3 8.4Z" fill="#2f8f68"/></svg>
<div style="left:522.4px;top:708.0px;width:16.3px;height:16.6px;background:#fff;border:1px solid #9a9a9a;border-radius:2px;"></div>
<svg style="left:524px;top:709.7px" width="13" height="13" viewBox="0 0 13 13"><path d="M2.2 2.2L10.8 10.8M10.8 2.2L2.2 10.8" stroke="#f8c8c4" stroke-width="4.6" stroke-linecap="round"/><path d="M2.4 2.4L10.6 10.6M10.6 2.4L2.4 10.6" stroke="#ee5a50" stroke-width="3" stroke-linecap="round"/></svg>
<div style="left:176.5px;top:727.93px;width:23.5px;height:23.2px;background:#e6e6e6;border-right:1px solid #b8b8b8;"></div>
<div style="left:176.5px;top:751.03px;width:365px;height:1px;background:#cfcfcf;"></div>
<span class="t" style="left:206.60px;top:734.00px;font-size:12px;color:#1a1a1a;">2</span>
<span class="t" style="left:240.30px;top:734.00px;font-size:12px;color:#1a1a1a;letter-spacing:-0.253px;">Uniform layer</span>
<span class="t" style="left:316.90px;top:734.00px;font-size:12px;color:#1a1a1a;letter-spacing:-0.767px;">1571</span>
<div class="cmb" style="left:377.9px;top:730.7299999999999px;width:116.4px;height:19.2px;"></div>
<span class="t" style="left:381.60px;top:734.00px;font-size:12px;color:#111;letter-spacing:-0.900px;">B 500B</span>
<svg style="left:485.6px;top:738.8299999999999px" width="4.4" height="2.6" viewBox="0 0 4.4 2.6"><path d="M0 0h4.4l-2.2 2.6z" fill="#111"/></svg>
<div class="btn" style="left:496.2px;top:730.7299999999999px;width:17.3px;height:19.2px;"></div>
<svg style="left:498px;top:732.8px" width="14" height="15" viewBox="0 0 14 15"><rect x="0.6" y="1.6" width="12.6" height="12.4" fill="#74c4a0" fill-opacity=".78" stroke="#58a884" stroke-opacity=".7" stroke-width=".8"/><path d="M3 8.2C3 5.4 6 4.4 8.4 5.6L8.8 4L11.4 7L7.6 8.2L8 6.8C6.4 6.2 4.8 7 4.6 8.6Z" fill="#2f8f68"/><path d="M10.8 8.6C10.8 11 8 12 5.8 11L5.4 12.4L3 9.8L6.4 8.6L6.1 9.9C7.6 10.4 9 9.8 9.3 8.4Z" fill="#2f8f68"/></svg>
<div style="left:522.4px;top:732.13px;width:16.3px;height:16.6px;background:#fff;border:1px solid #9a9a9a;border-radius:2px;"></div>
<svg style="left:524px;top:733.8px" width="13" height="13" viewBox="0 0 13 13"><path d="M2.2 2.2L10.8 10.8M10.8 2.2L2.2 10.8" stroke="#f8c8c4" stroke-width="4.6" stroke-linecap="round"/><path d="M2.4 2.4L10.6 10.6M10.6 2.4L2.4 10.6" stroke="#ee5a50" stroke-width="3" stroke-linecap="round"/></svg>
<div style="left:176.5px;top:751.56px;width:365px;height:24.1px;background:#eeeeee;"></div>
<div style="left:176.5px;top:752.06px;width:23.5px;height:23.2px;background:#e6e6e6;border-right:1px solid #b8b8b8;"></div>
<div style="left:176.5px;top:775.16px;width:365px;height:1px;background:#cfcfcf;"></div>
<span class="t" style="left:206.60px;top:758.00px;font-size:12px;color:#1a1a1a;">3</span>
<span class="t" style="left:240.30px;top:758.00px;font-size:12px;color:#1a1a1a;letter-spacing:-0.253px;">Uniform layer</span>
<span class="t" style="left:316.90px;top:758.00px;font-size:12px;color:#1a1a1a;letter-spacing:-0.820px;">942</span>
<div class="cmb" style="left:377.9px;top:754.8599999999999px;width:116.4px;height:19.2px;"></div>
<span class="t" style="left:381.60px;top:758.00px;font-size:12px;color:#111;letter-spacing:-0.900px;">B 500B</span>
<svg style="left:485.6px;top:762.9599999999999px" width="4.4" height="2.6" viewBox="0 0 4.4 2.6"><path d="M0 0h4.4l-2.2 2.6z" fill="#111"/></svg>
<div class="btn" style="left:496.2px;top:754.8599999999999px;width:17.3px;height:19.2px;"></div>
<svg style="left:498px;top:757.0px" width="14" height="15" viewBox="0 0 14 15"><rect x="0.6" y="1.6" width="12.6" height="12.4" fill="#74c4a0" fill-opacity=".78" stroke="#58a884" stroke-opacity=".7" stroke-width=".8"/><path d="M3 8.2C3 5.4 6 4.4 8.4 5.6L8.8 4L11.4 7L7.6 8.2L8 6.8C6.4 6.2 4.8 7 4.6 8.6Z" fill="#2f8f68"/><path d="M10.8 8.6C10.8 11 8 12 5.8 11L5.4 12.4L3 9.8L6.4 8.6L6.1 9.9C7.6 10.4 9 9.8 9.3 8.4Z" fill="#2f8f68"/></svg>
<div style="left:522.4px;top:756.26px;width:16.3px;height:16.6px;background:#fff;border:1px solid #9a9a9a;border-radius:2px;"></div>
<svg style="left:524px;top:758.0px" width="13" height="13" viewBox="0 0 13 13"><path d="M2.2 2.2L10.8 10.8M10.8 2.2L2.2 10.8" stroke="#f8c8c4" stroke-width="4.6" stroke-linecap="round"/><path d="M2.4 2.4L10.6 10.6M10.6 2.4L2.4 10.6" stroke="#ee5a50" stroke-width="3" stroke-linecap="round"/></svg>
<div style="left:176.5px;top:776.1899999999999px;width:23.5px;height:23.2px;background:#e6e6e6;border-right:1px solid #b8b8b8;"></div>
<div style="left:176.5px;top:799.29px;width:365px;height:1px;background:#cfcfcf;"></div>
<span class="t" style="left:206.60px;top:782.00px;font-size:12px;color:#1a1a1a;">4</span>
<span class="t" style="left:240.30px;top:782.00px;font-size:12px;color:#1a1a1a;letter-spacing:-0.253px;">Uniform layer</span>
<span class="t" style="left:316.90px;top:782.00px;font-size:12px;color:#1a1a1a;letter-spacing:-0.820px;">226</span>
<div class="cmb" style="left:377.9px;top:778.9899999999999px;width:116.4px;height:19.2px;"></div>
<span class="t" style="left:381.60px;top:782.00px;font-size:12px;color:#111;letter-spacing:-0.900px;">B 500B</span>
<svg style="left:485.6px;top:787.0899999999999px" width="4.4" height="2.6" viewBox="0 0 4.4 2.6"><path d="M0 0h4.4l-2.2 2.6z" fill="#111"/></svg>
<div class="btn" style="left:496.2px;top:778.9899999999999px;width:17.3px;height:19.2px;"></div>
<svg style="left:498px;top:781.1px" width="14" height="15" viewBox="0 0 14 15"><rect x="0.6" y="1.6" width="12.6" height="12.4" fill="#74c4a0" fill-opacity=".78" stroke="#58a884" stroke-opacity=".7" stroke-width=".8"/><path d="M3 8.2C3 5.4 6 4.4 8.4 5.6L8.8 4L11.4 7L7.6 8.2L8 6.8C6.4 6.2 4.8 7 4.6 8.6Z" fill="#2f8f68"/><path d="M10.8 8.6C10.8 11 8 12 5.8 11L5.4 12.4L3 9.8L6.4 8.6L6.1 9.9C7.6 10.4 9 9.8 9.3 8.4Z" fill="#2f8f68"/></svg>
<div style="left:522.4px;top:780.39px;width:16.3px;height:16.6px;background:#fff;border:1px solid #9a9a9a;border-radius:2px;"></div>
<svg style="left:524px;top:782.1px" width="13" height="13" viewBox="0 0 13 13"><path d="M2.2 2.2L10.8 10.8M10.8 2.2L2.2 10.8" stroke="#f8c8c4" stroke-width="4.6" stroke-linecap="round"/><path d="M2.4 2.4L10.6 10.6M10.6 2.4L2.4 10.6" stroke="#ee5a50" stroke-width="3" stroke-linecap="round"/></svg>
<div style="left:176.5px;top:800.3199999999999px;width:23.5px;height:23.2px;background:#e6e6e6;border-right:1px solid #b8b8b8;"></div>
<div style="left:176.5px;top:823.42px;width:365px;height:1px;background:#cfcfcf;"></div>
<span class="t" style="left:206.60px;top:806.00px;font-size:12px;color:#1a1a1a;">5</span>
<span class="t" style="left:240.30px;top:806.00px;font-size:12px;color:#1a1a1a;letter-spacing:-0.253px;">Uniform layer</span>
<span class="t" style="left:316.90px;top:806.00px;font-size:12px;color:#1a1a1a;letter-spacing:-0.820px;">226</span>
<div class="cmb" style="left:377.9px;top:803.1199999999999px;width:116.4px;height:19.2px;"></div>
<span class="t" style="left:381.60px;top:806.00px;font-size:12px;color:#111;letter-spacing:-0.900px;">B 500B</span>
<svg style="left:485.6px;top:811.2199999999999px" width="4.4" height="2.6" viewBox="0 0 4.4 2.6"><path d="M0 0h4.4l-2.2 2.6z" fill="#111"/></svg>
<div class="btn" style="left:496.2px;top:803.1199999999999px;width:17.3px;height:19.2px;"></div>
<svg style="left:498px;top:805.2px" width="14" height="15" viewBox="0 0 14 15"><rect x="0.6" y="1.6" width="12.6" height="12.4" fill="#74c4a0" fill-opacity=".78" stroke="#58a884" stroke-opacity=".7" stroke-width=".8"/><path d="M3 8.2C3 5.4 6 4.4 8.4 5.6L8.8 4L11.4 7L7.6 8.2L8 6.8C6.4 6.2 4.8 7 4.6 8.6Z" fill="#2f8f68"/><path d="M10.8 8.6C10.8 11 8 12 5.8 11L5.4 12.4L3 9.8L6.4 8.6L6.1 9.9C7.6 10.4 9 9.8 9.3 8.4Z" fill="#2f8f68"/></svg>
<div style="left:522.4px;top:804.52px;width:16.3px;height:16.6px;background:#fff;border:1px solid #9a9a9a;border-radius:2px;"></div>
<svg style="left:524px;top:806.2px" width="13" height="13" viewBox="0 0 13 13"><path d="M2.2 2.2L10.8 10.8M10.8 2.2L2.2 10.8" stroke="#f8c8c4" stroke-width="4.6" stroke-linecap="round"/><path d="M2.4 2.4L10.6 10.6M10.6 2.4L2.4 10.6" stroke="#ee5a50" stroke-width="3" stroke-linecap="round"/></svg>
<div style="left:234.3px;top:703.3px;width:1px;height:120.7px;background:#d4d4d4;"></div>
<div style="left:311.5px;top:703.3px;width:1px;height:120.7px;background:#d4d4d4;"></div>
<div style="left:372.3px;top:703.3px;width:1px;height:120.7px;background:#d4d4d4;"></div>
<div style="left:516px;top:703.3px;width:1px;height:120.7px;background:#d4d4d4;"></div>
<svg style="left:184px;top:759px" width="9" height="10" viewBox="0 0 9 10"><path d="M1 1.2L7 5L1 8.8" fill="none" stroke="#8a8a8a" stroke-width="1.5"/></svg>
<svg style="left:225px;top:673px" width="24" height="11" viewBox="0 0 24 11"><path d="M0.8 5.5L6 0.8V3.8H18V0.8L23.2 5.5L18 10.2V7.2H6V10.2Z" fill="#fff" stroke="#111" stroke-width=".9"/></svg>
<div style="left:543.5px;top:678px;width:338.5px;height:280px;background:#fff;border:1px solid #a0a0a0;"></div>
<div style="left:543.5px;top:678px;width:338.5px;height:25px;background:#bdbdbd;"></div>
<div style="left:544px;top:702.5px;width:337.5px;height:1px;background:#9a9a9a;"></div>
<div style="left:545.8px;top:683px;width:37.4px;height:20.4px;background:#fff;border:1px solid #d0d0d0;border-bottom:none;border-radius:3px 3px 0 0;"></div>
<div style="left:584.5px;top:685px;width:31.4px;height:18px;background:linear-gradient(#f0f0f0,#e0e0e0);border:1px solid #d0d0d0;border-bottom:none;border-radius:3px 3px 0 0;"></div>
<span class="t" style="left:550.80px;top:687.00px;font-size:12px;color:#1c1c1c;letter-spacing:-0.800px;">Layer</span>
<span class="t" style="left:589.40px;top:687.00px;font-size:12px;color:#1c1c1c;letter-spacing:-0.900px;">Bars</span>
<div style="left:545.3px;top:704.6px;width:334.5px;height:25.3px;background:#e7e7e7;border-bottom:1px solid #bdbdbd;"></div>
<svg style="left:552px;top:713px" width="9" height="8" viewBox="0 0 9 8"><path d="M8 0.4V7.2H0.8z" fill="#111"/></svg>
<span class="t" style="left:577.60px;top:712.00px;font-size:12px;color:#5a5a5a;letter-spacing:-0.395px;">Layer details</span>
<div style="left:545.3px;top:730px;width:23.4px;height:46.6px;background:#e9e9e9;"></div>
<div style="left:568.7px;top:731.2px;width:143.8px;height:21.8px;background:#f97a1e;"></div>
<span class="t" style="left:578.20px;top:737.00px;font-size:12px;color:#fff;font-weight:bold;letter-spacing:-0.720px;">Ø [mm]</span>
<div style="left:716.2px;top:732.3px;width:161px;height:20px;background:#fff;border:1px solid #e8cc6a;box-shadow:0 0 0 1px #fdf3c8;"></div>
<div style="left:721.6px;top:735.4px;width:13.6px;height:14.4px;background:#a9c6ee;"></div>
<span class="t" style="left:722.20px;top:737.00px;font-size:12px;color:#3a4a66;letter-spacing:-0.720px;">20</span>
<span class="t" style="left:579.00px;top:760.00px;font-size:12px;color:#1c1c1c;">n</span>
<div style="left:716.2px;top:755.2px;width:161px;height:20.2px;background:#fff;border:1px solid #8e8e8e;border-radius:2px;"></div>
<span class="t" style="left:722.20px;top:760.00px;font-size:12px;color:#1c1c1c;">3</span>
<div style="left:34px;top:964.5px;width:1848px;height:6px;background:#c0c0c0;"></div>
<div style="left:34px;top:970px;width:1848px;height:1px;background:#a2a2a2;"></div>
<div style="left:34px;top:971px;width:1848px;height:31px;background:#fff;"></div>
<div class="btn" style="left:1728.3px;top:976px;width:71.3px;height:21px;"></div>
<div class="btn" style="left:1805.3px;top:976px;width:71.3px;height:21px;"></div>
<span class="t" style="left:1756.80px;top:981.00px;font-size:12px;color:#1a1a1a;letter-spacing:-0.900px;">OK</span>
<span class="t" style="left:1824.40px;top:981.00px;font-size:12px;color:#1a1a1a;letter-spacing:-0.776px;">Cancel</span>
<div style="left:34px;top:1001.5px;width:1848px;height:38.5px;background:linear-gradient(90deg,#0b0b0b 0,#0e0e0e 7%,#242424 12%,#2c2c2c 20%,#313131 36%,#383838 60%,#333333 75%,#2a2a2a 84.5%,#1c1c1c 88%,#101010 90.5%,#0b0b0b 100%);"></div>
<div style="left:34px;top:1001.5px;width:1848px;height:1px;background:#3a3a3a;"></div>
<div style="left:316.9px;top:1002px;width:46.2px;height:38px;background:#c47a38;"></div>
<div style="left:647px;top:1002px;width:46px;height:38px;background:#4c4c4c;"></div>
<div style="left:1877.3px;top:1002px;width:0.8px;height:38px;background:#555;"></div>
<div style="left:0px;top:1040px;width:1920px;height:40px;background:#121212;"></div>
<div style="left:588px;top:1040px;width:48px;height:40px;background:#3c3c3c;"></div>
<div style="left:1915.5px;top:1040px;width:0.8px;height:40px;background:#666;"></div>
<div style="left:179.4px;top:1038px;width:38.599999999999994px;height:2px;background:#76b9ed;"></div>
<div style="left:274px;top:1038px;width:38.19999999999999px;height:2px;background:#76b9ed;"></div>
<div style="left:316.9px;top:1038px;width:46.10000000000002px;height:2px;background:#f2882a;"></div>
<div style="left:368px;top:1038px;width:38.30000000000001px;height:2px;background:#76b9ed;"></div>
<div style="left:415px;top:1038px;width:38.60000000000002px;height:2px;background:#76b9ed;"></div>
<div style="left:462px;top:1038px;width:38.39999999999998px;height:2px;background:#76b9ed;"></div>
<div style="left:509px;top:1038px;width:38.5px;height:2px;background:#76b9ed;"></div>
<div style="left:556.5px;top:1038px;width:38.5px;height:2px;background:#76b9ed;"></div>
<div style="left:603.6px;top:1038px;width:38.39999999999998px;height:2px;background:#76b9ed;"></div>
<div style="left:647px;top:1038px;width:46px;height:2px;background:#76b9ed;"></div>
<div style="left:698px;top:1038px;width:38px;height:2px;background:#76b9ed;"></div>
<div style="left:151px;top:1078px;width:39.80000000000001px;height:2px;background:#76b9ed;"></div>
<div style="left:200px;top:1078px;width:39.80000000000001px;height:2px;background:#76b9ed;"></div>
<div style="left:249px;top:1078px;width:39.75px;height:2px;background:#76b9ed;"></div>
<div style="left:298px;top:1078px;width:39.5px;height:2px;background:#76b9ed;"></div>
<div style="left:347px;top:1078px;width:39.5px;height:2px;background:#76b9ed;"></div>
<div style="left:396px;top:1078px;width:39.5px;height:2px;background:#76b9ed;"></div>
<div style="left:445.5px;top:1078px;width:39.5px;height:2px;background:#76b9ed;"></div>
<div style="left:494px;top:1078px;width:39.75px;height:2px;background:#76b9ed;"></div>
<div style="left:543px;top:1078px;width:40px;height:2px;background:#76b9ed;"></div>
<div style="left:588px;top:1078px;width:48px;height:2px;background:#76b9ed;"></div>
<div style="left:641px;top:1078px;width:39.60000000000002px;height:2px;background:#76b9ed;"></div>
<svg style="left:0;top:1001px" width="1920" height="79" viewBox="0 1001 1920 79"><path d="M48.8 1015.08L55.41759999999999 1013.96V1020.52H48.8Z M56.377599999999994 1013.72L64.8 1013V1020.52H56.377599999999994Z M48.8 1021.48H55.41759999999999V1028.04L48.8 1026.92Z M56.377599999999994 1021.48H64.8V1029L56.377599999999994 1028.28Z" fill="#fff"/><circle cx="105.89999999999999" cy="1017.8000000000001" r="5" fill="none" stroke="#fff" stroke-width="1.4"/><path d="M102.5 1021.6L95.7 1028.6" stroke="#fff" stroke-width="1.6"/><path d="M143.5 1017.5H152.5V1025H143.5Z" fill="none" stroke="#fff" stroke-width="1.3"/><path d="M141.5 1015H153.5M141.5 1028H153.5M142.1 1014.4V1016.6M152.9 1014.4V1016.6M142.1 1026.4V1028.6M152.9 1026.4V1028.6" stroke="#fff" stroke-width="1.2" fill="none"/><path d="M156.5 1014V1017.6M156.5 1022V1029" stroke="#fff" stroke-width="1.3"/><rect x="155.5" y="1018.4" width="2.2" height="2.6" fill="#fff"/><path d="M187.52 1013.65H195.36L197.32000000000002 1015.6099999999999H208.59V1029.33H187.52Z" fill="#f5d57e"/><path d="M187.52 1017.0799999999999H208.59V1029.33H187.52Z" fill="#fbe29a"/><path d="M191.93 1022.9599999999999H204.18V1029.82H201.24V1025.8999999999999H194.87V1029.82H191.93Z" fill="#3aa0e6"/><rect x="233.89999999999998" y="1009.0" width="23.6" height="23.6" rx="2.0" fill="#2442c6" stroke="#5a78e0" stroke-width=".8"/><rect x="240.29999999999998" y="1009.6" width="11.0" height="6.6" fill="#c9ccd6"/><rect x="245.29999999999998" y="1010.4" width="3.0" height="5.0" fill="#2a3a9a"/><rect x="237.29999999999998" y="1019.0" width="16.8" height="12.6" fill="#fde6e6"/><rect x="237.29999999999998" y="1020.6" width="16.8" height="1.7" fill="#f08a96"/><rect x="237.29999999999998" y="1023.8" width="16.8" height="1.7" fill="#f08a96"/><rect x="237.29999999999998" y="1027.0" width="16.8" height="1.7" fill="#f08a96"/><rect x="237.29999999999998" y="1030.2" width="16.8" height="1.7" fill="#f08a96"/><path d="M292.7 1021L283.52 1015.70A10.6 10.6 0 0 1 301.88 1015.70Z" fill="#e8453c"/><path d="M292.7 1021L301.88 1015.70A10.6 10.6 0 0 1 292.70 1031.60Z" fill="#f9c12e"/><path d="M292.7 1021L292.70 1031.60A10.6 10.6 0 0 1 283.52 1015.70Z" fill="#34a152"/><circle cx="292.7" cy="1021" r="4.981999999999999" fill="#f4f4f4"/><circle cx="292.7" cy="1021" r="3.816" fill="#4a8af0"/><circle cx="338.6" cy="1019.6" r="8.6" fill="#14a4e8"/><circle cx="334.40000000000003" cy="1015.0" r="5.2" fill="#14a4e8"/><circle cx="342.8" cy="1024.2" r="5.2" fill="#14a4e8"/><text x="338.6" y="1024.6" font-size="14.0" font-weight="bold" text-anchor="middle" fill="#fff" font-family="Liberation Sans, sans-serif">S</text><circle cx="348" cy="1028.4" r="5.2" fill="#f5b02a" stroke="#fff" stroke-width=".8"/><text x="348" y="1031.4" font-size="8" font-weight="bold" text-anchor="middle" fill="#222" font-family="Liberation Sans, sans-serif">1</text><circle cx="387.2" cy="1021" r="10.8" fill="#1db954"/><path d="M380.4 1017.2C385 1015.8 390.6 1016.2 394.6 1018.4M381.2 1021C385 1019.8 389.8 1020.2 393.4 1022.2M382 1024.6C385.2 1023.8 388.8 1024 391.8 1025.8" stroke="#111" stroke-width="1.8" fill="none" stroke-linecap="round"/><circle cx="434.6" cy="1020.4" r="9.4" fill="none" stroke="#f5a623" stroke-width="1.8"/><path d="M426.6 1027.4L423.6 1030.4L429.6 1029.6" fill="none" stroke="#f5a623" stroke-width="1.6"/><path d="M426.4 1019L434.6 1024.4L442.8 1019" fill="none" stroke="#f5a623" stroke-width="1.6"/><path d="M471 1012L486 1010L490.6 1030L472 1031Z" fill="#2a86e0"/><text x="480.4" y="1027.4" font-size="17" font-weight="bold" text-anchor="middle" fill="#fff" font-family="Liberation Sans, sans-serif">C</text><path d="M476 1030L490 1024" stroke="#c8302a" stroke-width="2"/><path d="M487 1019L491.6 1017.6V1029H487Z" fill="#d9d9d9"/><rect x="526.6" y="1013" width="13" height="16" fill="#fff" stroke="#1e7145" stroke-width=".8"/><rect x="531.6" y="1015.0" width="6.4" height="1.3" fill="#1e7145"/><rect x="531.6" y="1017.4" width="6.4" height="1.3" fill="#1e7145"/><rect x="531.6" y="1019.8" width="6.4" height="1.3" fill="#1e7145"/><rect x="531.6" y="1022.2" width="6.4" height="1.3" fill="#1e7145"/><rect x="531.6" y="1024.6" width="6.4" height="1.3" fill="#1e7145"/><rect x="531.6" y="1027.0" width="6.4" height="1.3" fill="#1e7145"/><path d="M517.6 1013.4L530.6 1011V1031L517.6 1028.6Z" fill="#1e7145"/><text x="524.2" y="1025.2" font-size="10.5" font-weight="bold" text-anchor="middle" fill="#fff" font-family="Liberation Sans, sans-serif">X</text><rect x="573.6" y="1013" width="13" height="16" fill="#fff" stroke="#2b579a" stroke-width=".8"/><rect x="578.6" y="1015.0" width="6.4" height="1.3" fill="#2b579a"/><rect x="578.6" y="1017.4" width="6.4" height="1.3" fill="#2b579a"/><rect x="578.6" y="1019.8" width="6.4" height="1.3" fill="#2b579a"/><rect x="578.6" y="1022.2" width="6.4" height="1.3" fill="#2b579a"/><rect x="578.6" y="1024.6" width="6.4" height="1.3" fill="#2b579a"/><rect x="578.6" y="1027.0" width="6.4" height="1.3" fill="#2b579a"/><path d="M564.6 1013.4L577.6 1011V1031L564.6 1028.6Z" fill="#2b579a"/><text x="571.2" y="1025.2" font-size="10.5" font-weight="bold" text-anchor="middle" fill="#fff" font-family="Liberation Sans, sans-serif">W</text><rect x="620.6" y="1013" width="13" height="16" fill="#fff" stroke="#d24726" stroke-width=".8"/><rect x="625.6" y="1015.0" width="6.4" height="1.3" fill="#d24726"/><rect x="625.6" y="1017.4" width="6.4" height="1.3" fill="#d24726"/><rect x="625.6" y="1019.8" width="6.4" height="1.3" fill="#d24726"/><rect x="625.6" y="1022.2" width="6.4" height="1.3" fill="#d24726"/><rect x="625.6" y="1024.6" width="6.4" height="1.3" fill="#d24726"/><rect x="625.6" y="1027.0" width="6.4" height="1.3" fill="#d24726"/><path d="M611.6 1013.4L624.6 1011V1031L611.6 1028.6Z" fill="#d24726"/><text x="618.2" y="1025.2" font-size="10.5" font-weight="bold" text-anchor="middle" fill="#fff" font-family="Liberation Sans, sans-serif">P</text><rect x="658.2" y="1009.4" width="23.4" height="23.4" rx="3" fill="#f47a20"/><rect x="663.4" y="1022" width="13" height="2.6" fill="#fff"/><rect x="662" y="1026.4" width="3.4" height="3" rx="1" fill="#fff"/><rect x="674.4" y="1026.4" width="3.4" height="3" rx="1" fill="#fff"/><circle cx="717.2" cy="1020.7" r="12.2" fill="#0e1a30" opacity=".55"/><circle cx="717.20" cy="1014.40" r="3.1" fill="#4e6e94" stroke="#e6f3ff" stroke-width="1.9"/><circle cx="722.66" cy="1017.55" r="3.1" fill="#4e6e94" stroke="#e6f3ff" stroke-width="1.9"/><circle cx="722.66" cy="1023.85" r="3.1" fill="#4e6e94" stroke="#e6f3ff" stroke-width="1.9"/><circle cx="717.20" cy="1027.00" r="3.1" fill="#4e6e94" stroke="#e6f3ff" stroke-width="1.9"/><circle cx="711.74" cy="1023.85" r="3.1" fill="#4e6e94" stroke="#e6f3ff" stroke-width="1.9"/><circle cx="711.74" cy="1017.55" r="3.1" fill="#4e6e94" stroke="#e6f3ff" stroke-width="1.9"/><circle cx="717.2" cy="1020.7" r="2.1" fill="#3c82d4"/><circle cx="1639.4" cy="1016.2" r="2.6" fill="none" stroke="#fff" stroke-width="1.1"/><path d="M1635 1024.6C1635 1019.4 1643.6 1019.4 1643.6 1024.6" fill="none" stroke="#fff" stroke-width="1.1"/><circle cx="1633.4" cy="1020.2" r="2.2" fill="none" stroke="#fff" stroke-width="1.1"/><path d="M1629.8 1027.4C1629.8 1023 1637 1023 1637 1027.4" fill="none" stroke="#fff" stroke-width="1.1"/><path d="M1665.3 1024.0L1671.3 1018.0L1677.3 1024.0" fill="none" stroke="#fff" stroke-width="1.3"/><path d="M1690.4 1015.4H1701.8V1024H1690.4Z" fill="none" stroke="#fff" stroke-width="1.1"/><path d="M1693 1027.4H1699M1696 1024V1027.4" stroke="#fff" stroke-width="1.1"/><path d="M1687 1015H1691V1019H1687ZM1688.6 1019V1027.4H1691" fill="none" stroke="#fff" stroke-width="1"/><path d="M1709.6 1019.2H1712.6L1716.1999999999998 1015.6V1027.6L1712.6 1024.0H1709.6Z" fill="none" stroke="#fff" stroke-width="1.1"/><path d="M1718.1999999999998 1019.2A3.4 3.4 0 0 1 1718.1999999999998 1024.0" fill="none" stroke="#fff" stroke-width="1.1"/><path d="M1720.1999999999998 1017.2A6 6 0 0 1 1720.1999999999998 1026.0" fill="none" stroke="#ddd" stroke-width="1"/><path d="M1722.3999999999999 1015.2A8.6 8.6 0 0 1 1722.3999999999999 1028.0" fill="none" stroke="#888" stroke-width="1"/><path d="M1842.4 1013H1858.0V1024.4H1847.4L1844.0 1027.6V1024.4H1842.4Z" fill="#fff"/><path d="M1845.4 1016H1855.0M1845.4 1018.6H1855.0M1845.4 1021.2H1852.0" stroke="#111" stroke-width="1"/><circle cx="1857.8000000000002" cy="1027.6" r="7.6" fill="#2c2c2c" stroke="#6a6a6a" stroke-width="1"/><text x="1857.8000000000002" y="1031.6" font-size="11" text-anchor="middle" fill="#fff" font-family="Liberation Sans, sans-serif">1</text><path d="M14.6 1054.21L21.6312 1053.02V1059.99H14.6Z M22.6512 1052.765L31.6 1052V1059.99H22.6512Z M14.6 1061.01H21.6312V1067.98L14.6 1066.79Z M22.6512 1061.01H31.6V1069L22.6512 1068.235Z" fill="#fff"/><circle cx="74.8" cy="1057.0" r="5" fill="none" stroke="#fff" stroke-width="1.4"/><path d="M71.4 1060.8L64.60000000000001 1067.8" stroke="#fff" stroke-width="1.6"/><path d="M114 1056.5H123V1064H114Z" fill="none" stroke="#fff" stroke-width="1.3"/><path d="M112 1054H124M112 1067H124M112.6 1053.4V1055.6M123.4 1053.4V1055.6M112.6 1065.4V1067.6M123.4 1065.4V1067.6" stroke="#fff" stroke-width="1.2" fill="none"/><path d="M127 1053V1056.6M127 1061V1068" stroke="#fff" stroke-width="1.3"/><rect x="126" y="1057.4" width="2.2" height="2.6" fill="#fff"/><path d="M159.8 1052.5H167.8L169.8 1054.5H181.3V1068.5H159.8Z" fill="#f5d57e"/><path d="M159.8 1056.0H181.3V1068.5H159.8Z" fill="#fbe29a"/><path d="M164.3 1062.0H176.8V1069.0H173.8V1065.0H167.3V1069.0H164.3Z" fill="#3aa0e6"/><rect x="208.1" y="1048.0" width="23.6" height="23.6" rx="2.0" fill="#2442c6" stroke="#5a78e0" stroke-width=".8"/><rect x="214.5" y="1048.6" width="11.0" height="6.6" fill="#c9ccd6"/><rect x="219.5" y="1049.4" width="3.0" height="5.0" fill="#2a3a9a"/><rect x="211.5" y="1058.0" width="16.8" height="12.6" fill="#fde6e6"/><rect x="211.5" y="1059.6" width="16.8" height="1.7" fill="#f08a96"/><rect x="211.5" y="1062.8" width="16.8" height="1.7" fill="#f08a96"/><rect x="211.5" y="1066.0" width="16.8" height="1.7" fill="#f08a96"/><rect x="211.5" y="1069.2" width="16.8" height="1.7" fill="#f08a96"/><path d="M268.4 1059.6L259.05 1054.20A10.8 10.8 0 0 1 277.75 1054.20Z" fill="#e8453c"/><path d="M268.4 1059.6L277.75 1054.20A10.8 10.8 0 0 1 268.40 1070.40Z" fill="#f9c12e"/><path d="M268.4 1059.6L268.40 1070.40A10.8 10.8 0 0 1 259.05 1054.20Z" fill="#34a152"/><circle cx="268.4" cy="1059.6" r="5.076" fill="#f4f4f4"/><circle cx="268.4" cy="1059.6" r="3.888" fill="#4a8af0"/><circle cx="275.6" cy="1067" r="5.6" fill="#c9c9c9"/><path d="M272 1069L279 1063.4L280 1070Z" fill="#2a76c8"/><path d="M272.4 1070.6L277.6 1066.4L278 1071Z" fill="#e8c23a"/><path d="M317.4 1059.6L308.05 1054.20A10.8 10.8 0 0 1 326.75 1054.20Z" fill="#e8453c"/><path d="M317.4 1059.6L326.75 1054.20A10.8 10.8 0 0 1 317.40 1070.40Z" fill="#f9c12e"/><path d="M317.4 1059.6L317.40 1070.40A10.8 10.8 0 0 1 308.05 1054.20Z" fill="#34a152"/><circle cx="317.4" cy="1059.6" r="5.076" fill="#f4f4f4"/><circle cx="317.4" cy="1059.6" r="3.888" fill="#4a8af0"/><circle cx="324.6" cy="1066.6" r="6" fill="#7a9ad0"/><circle cx="323.6" cy="1064.8" r="2.8" fill="#e8c9a0"/><path d="M319.8 1070.6C320.4 1066.8 327 1066.8 327.6 1070.6Z" fill="#4a6ac0"/><circle cx="327.6" cy="1062.8" r="2" fill="#3a6a30"/><circle cx="366.9" cy="1059.8" r="9.459999999999999" fill="#14a4e8"/><circle cx="362.28" cy="1054.74" r="5.720000000000001" fill="#14a4e8"/><circle cx="371.52" cy="1064.86" r="5.720000000000001" fill="#14a4e8"/><text x="366.9" y="1065.3" font-size="15.399999999999999" font-weight="bold" text-anchor="middle" fill="#fff" font-family="Liberation Sans, sans-serif">S</text><defs><linearGradient id="gac" x1="0" y1="0" x2="0" y2="1"><stop offset="0" stop-color="#e02020"/><stop offset="1" stop-color="#9a0c0c"/></linearGradient></defs><rect x="405.2" y="1049" width="21" height="20.4" fill="url(#gac)"/><path d="M409.4 1064.6C413.6 1062.4 416.4 1056.6 415.6 1053.4C414.8 1051.8 413.8 1053.4 414.4 1055.6C415.4 1059.6 419 1062.6 422.2 1062.6C423.6 1062.2 422.6 1061 420.4 1061.2C416.6 1061.4 411.6 1063 409.4 1064.6Z" fill="none" stroke="#fff" stroke-width="1"/><rect x="453" y="1048" width="24" height="24" rx="3.4" fill="#f47a20"/><rect x="457" y="1062.6" width="16" height="2.8" fill="#fff"/><path d="M458.6 1054L465 1060.4L471.4 1054" fill="none" stroke="#fff" stroke-width="2.6"/><rect x="502" y="1048" width="24" height="24" fill="#fbdc9a"/><path d="M509.6 1052H517C522 1052 522 1059.6 517.6 1060L521 1068H517L514 1060.6H513V1068H509.6Z" fill="#e8a020"/><text x="520" y="1070.4" font-size="4.6" fill="#c88010" text-anchor="middle" font-family="Liberation Sans, sans-serif">2018</text><rect x="551.6" y="1048.6" width="18.6" height="22" fill="#e4e4e4" stroke="#bbb" stroke-width=".6"/><rect x="553.2" y="1050" width="15.4" height="12" fill="#3a6ad0"/><ellipse cx="562" cy="1054" rx="4.6" ry="2.4" fill="#c8dcf4"/><rect x="553.2" y="1062" width="15.4" height="3" fill="#2a3a8a"/><path d="M557.6 1068.6L573 1055.4" stroke="#c8202a" stroke-width="1.8"/><path d="M555.6 1070.2L558.6 1067.6" stroke="#bbb" stroke-width="1.8"/><rect x="601" y="1057.6" width="22" height="13.4" rx="1.6" fill="#fff"/><path d="M601 1052.6L622.4 1048.4L623 1051.6L601.6 1055.8Z" fill="#fff"/><path d="M605 1051.8L607.4 1054.6M610 1050.8L612.4 1053.6M615 1049.8L617.4 1052.6M620 1048.8L622 1051.4" stroke="#3c3c3c" stroke-width="2"/><rect x="658.6" y="1052.4" width="13" height="16" fill="#fff" stroke="#2b579a" stroke-width=".8"/><rect x="663.6" y="1054.4" width="6.4" height="1.3" fill="#2b579a"/><rect x="663.6" y="1056.8000000000002" width="6.4" height="1.3" fill="#2b579a"/><rect x="663.6" y="1059.2" width="6.4" height="1.3" fill="#2b579a"/><rect x="663.6" y="1061.6000000000001" width="6.4" height="1.3" fill="#2b579a"/><rect x="663.6" y="1064.0" width="6.4" height="1.3" fill="#2b579a"/><rect x="663.6" y="1066.4" width="6.4" height="1.3" fill="#2b579a"/><path d="M649.6 1052.8000000000002L662.6 1050.4V1070.4L649.6 1068.0Z" fill="#2b579a"/><text x="656.2" y="1064.6000000000001" font-size="10.5" font-weight="bold" text-anchor="middle" fill="#fff" font-family="Liberation Sans, sans-serif">W</text><path d="M1675 1063.4L1681 1057.4L1687 1063.4" fill="none" stroke="#fff" stroke-width="1.3"/><rect x="1698.2" y="1057" width="13.4" height="7.4" fill="none" stroke="#fff" stroke-width="1.1"/><rect x="1699.8" y="1058.6" width="8.6" height="4.2" fill="#fff"/><rect x="1712" y="1059.2" width="1.4" height="3" fill="#fff"/><circle cx="1734.6" cy="1065.6" r="1.5" fill="#fff"/><path d="M1729.6 1066.6A5.4 5.4 0 0 1 1735.4 1060.6" fill="none" stroke="#fff" stroke-width="1.1"/><path d="M1726.8 1066.8A8.4 8.4 0 0 1 1735.6 1057.8" fill="none" stroke="#ddd" stroke-width="1"/><path d="M1724.4 1067A11 11 0 0 1 1735.8 1055.4" fill="none" stroke="#bbb" stroke-width="1"/><path d="M1744.6 1058.8H1747.6L1751.1999999999998 1055.2V1067.2L1747.6 1063.6000000000001H1744.6Z" fill="none" stroke="#fff" stroke-width="1.1"/><path d="M1753.1999999999998 1058.8A3.4 3.4 0 0 1 1753.1999999999998 1063.6000000000001" fill="none" stroke="#fff" stroke-width="1.1"/><path d="M1755.1999999999998 1056.8A6 6 0 0 1 1755.1999999999998 1065.6000000000001" fill="none" stroke="#ddd" stroke-width="1"/><path d="M1757.3999999999999 1054.8A8.6 8.6 0 0 1 1757.3999999999999 1067.6000000000001" fill="none" stroke="#888" stroke-width="1"/><path d="M1879 1052H1894.6V1063.4H1884L1880.6 1066.6V1063.4H1879Z" fill="#fff"/><path d="M1882 1055H1891.6M1882 1057.6H1891.6M1882 1060.2H1888.6" stroke="#111" stroke-width="1"/><circle cx="1894.4" cy="1066.6" r="7.6" fill="#2c2c2c" stroke="#6a6a6a" stroke-width="1"/><text x="1894.4" y="1070.6" font-size="11" text-anchor="middle" fill="#fff" font-family="Liberation Sans, sans-serif">3</text></svg>
<span class="t" style="left:1736.70px;top:1015.00px;font-size:12px;color:#fff;letter-spacing:-0.900px;">SLK</span>
<span class="t" style="left:1784.50px;top:1006.00px;font-size:12px;color:#fff;letter-spacing:-0.900px;">11:19</span>
<span class="t" style="left:1770.00px;top:1023.00px;font-size:12px;color:#fff;letter-spacing:-0.562px;">14/08/2018</span>
<span class="t" style="left:1771.50px;top:1054.00px;font-size:12px;color:#fff;letter-spacing:-0.900px;">ENG</span>
<span class="t" style="left:1820.80px;top:1045.00px;font-size:12px;color:#fff;letter-spacing:-0.900px;">14:58</span>
<span class="t" style="left:1807.00px;top:1063.00px;font-size:12px;color:#fff;letter-spacing:-0.673px;">27.12.2018</span>
</div></body></html>
